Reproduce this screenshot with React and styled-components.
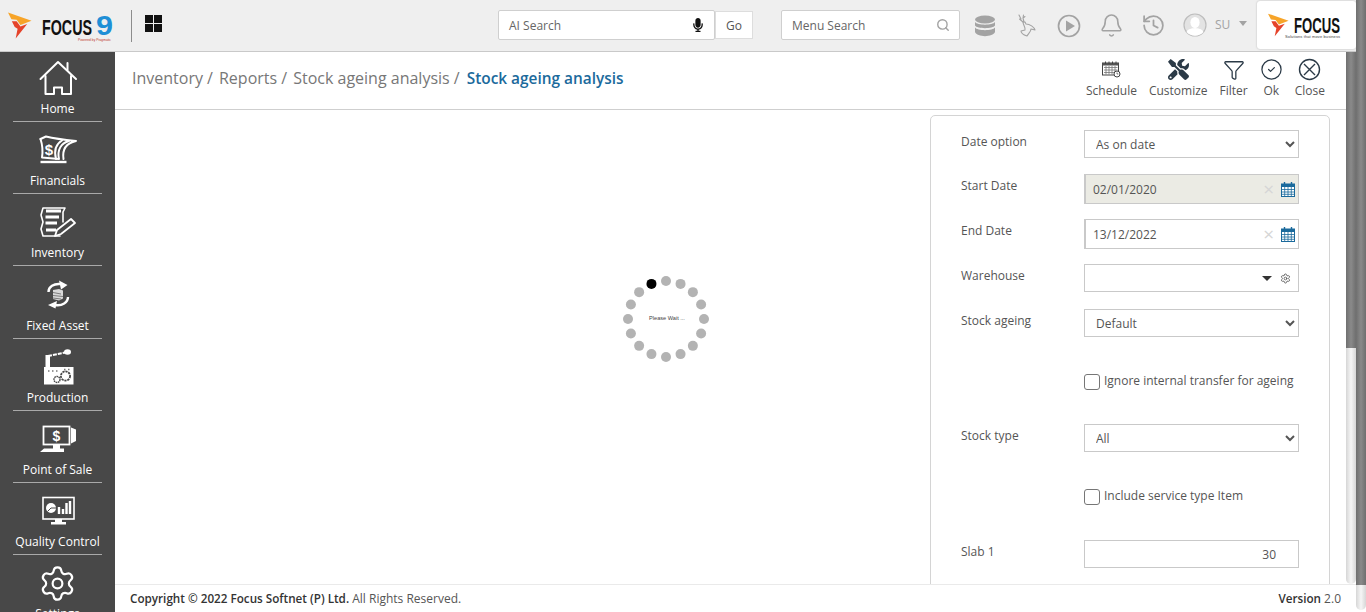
import React from "react";
import styled, { createGlobalStyle } from "styled-components";
import { Bell, History, Search, Filter, CircleCheck, Settings } from "lucide-react";
import { FaMicrophone, FaTools } from "react-icons/fa";

const GlobalStyle = createGlobalStyle`
  html, body {
    margin: 0;
    padding: 0;
    height: 100%;
    overflow: hidden;
    background: #fff;
    font-family: "Open Sans", "Liberation Sans", sans-serif;
  }
  * { box-sizing: border-box; }
`;

const BRAND_BLUE = "#1b6a9c";

const FlameMark = ({ width, height }) => (
  <svg width={width} height={height} viewBox="0 0 25 27">
    <path d="M0 0 L24.5 8.5 L13 13 L9 7.5 L3.5 7 Z" fill="#f7a428" />
    <path d="M4 9 L9 9 L13 14.5 L20 12 L8 27 L10 17 L7 15 Z" fill="#e5432a" />
  </svg>
);

const Focus9Logo = () => (
  <LogoWrap>
    <FlameMark width={25} height={27} />
    <svg width={72} height={30} viewBox="0 0 72 30">
      <text x="0" y="23.5" fontFamily="Liberation Sans" fontWeight="700" fontSize="22" textLength="50" lengthAdjust="spacingAndGlyphs" fill="#111">FOCUS</text>
      <text x="54" y="24" fontFamily="Liberation Sans" fontWeight="700" fontSize="27" textLength="17" lengthAdjust="spacingAndGlyphs" fill="#1f8fd6">9</text>
      <text x="36" y="30" fontFamily="Liberation Sans" fontSize="4" textLength="33" lengthAdjust="spacingAndGlyphs" fill="#c0392b">Powered by Pragmatic</text>
    </svg>
  </LogoWrap>
);

const FocusCardLogo = () => (
  <LogoCard>
    <FlameMark width={21} height={24} />
    <svg width={48} height={28} viewBox="0 0 48 28">
      <text x="1" y="22" fontFamily="Liberation Sans" fontWeight="700" fontSize="22" textLength="46" lengthAdjust="spacingAndGlyphs" fill="#111">FOCUS</text>
      <text x="-8" y="27" fontFamily="Liberation Sans" fontSize="4" textLength="55" lengthAdjust="spacing" fill="#444">Solutions that move business</text>
    </svg>
  </LogoCard>
);

const WhiteLine = { fill: "none", stroke: "#fff", strokeWidth: 2, strokeLinejoin: "round", strokeLinecap: "round" };

const HomeIcon = () => (
  <svg width="60" height="40" viewBox="0 0 60 40">
    <g {...WhiteLine}>
      <path d="M12.5 21 L30 4 L48 21" />
      <path d="M17.5 18 V36 H26 V29.5 H34 V36 H43 V18" />
      <path d="M39.5 5 V12" />
    </g>
  </svg>
);

const FinancialsIcon = () => (
  <svg width="60" height="40" viewBox="0 0 60 40">
    <g {...WhiteLine}>
      <path d="M12.5 9 L18 6.5 C28 9 38 10 48 11 C39 13 34 19 35.5 29" />
      <path d="M12.5 9 C14.5 15 15 21 14 27.5 L31 29 C29 20 33 13 41 11" />
      <path d="M28 29 C26 21 28 14 34 10.5" />
    </g>
    <path d="M12.5 32 H38.5" stroke="#fff" strokeWidth="2.4" />
    <text x="21" y="25" textAnchor="middle" fontFamily="Liberation Sans" fontWeight="700" fontSize="15" fill="#fff">$</text>
  </svg>
);

const InventoryIcon = () => (
  <svg width="60" height="40" viewBox="0 0 60 40">
    <path d="M15 6 H37 L35 10 V20 M13 13 L15 6 M13 13 L15 20 L13 27 L15 34 H32" {...WhiteLine} strokeWidth="1.6" />
    <path d="M18 9 H33 M17.5 15 H31 M17.5 21 H29 M18 28 H28" stroke="#fff" strokeWidth="3" />
    <path d="M27 34 L29 28 L43 17 L47 21 L33 32 Z" fill="#484848" stroke="#fff" strokeWidth="1.8" strokeLinejoin="round" />
  </svg>
);

const FixedAssetIcon = () => (
  <svg width="60" height="40" viewBox="0 0 60 40">
    <g fill="none" stroke="#fff" strokeWidth="2.4">
      <path d="M20.5 17 C20.5 11.5 26 8.5 32 9" />
      <path d="M40 22 C40 27.5 34 31 27.5 30" />
    </g>
    <path d="M31 5.5 L39.5 10 L33 14.5 Z M29 26 L20 30 L27.5 33.5 Z" fill="#fff" />
    <path d="M25 15 L31 14 L35 15.5 V23.5 L31 25.5 L25 24 Z" fill="#d8d8d8" />
    <path d="M25 17.5 L33 19 M25 20.5 L35 21.5 M25 23 L33 24" stroke="#7c7c7c" strokeWidth="1" />
  </svg>
);

const ProductionIcon = () => (
  <svg width="60" height="40" viewBox="0 0 60 40">
    <path d="M20 9 L30 7 L37 5.5" fill="none" stroke="#fff" strokeWidth="2" strokeDasharray="4 1" />
    <rect x="17.5" y="8" width="4.5" height="12" fill="#fff" />
    <ellipse cx="39.5" cy="5" rx="3.5" ry="2.8" fill="#fff" />
    <path d="M16 20 H45.5 V37.5 H16 Z" fill="#fff" />
    <path d="M20 24 h1.5 M24 24 h1.5 M28 24 h1.5 M36 22.5 h1.5 M40 22.5 h1.5" stroke="#777" strokeWidth="1.4" />
    <circle cx="37.5" cy="29" r="4.6" fill="#fff" stroke="#484848" strokeWidth="1.8" strokeDasharray="2.2 .8" />
    <circle cx="29" cy="32.5" r="3" fill="#fff" stroke="#484848" strokeWidth="1.4" strokeDasharray="1.6 .6" />
  </svg>
);

const PointOfSaleIcon = () => (
  <svg width="60" height="40" viewBox="0 0 60 40">
    <rect x="15.5" y="7.5" width="26" height="18" fill="none" stroke="#fff" strokeWidth="1.8" />
    <text x="28.5" y="22" textAnchor="middle" fontFamily="Liberation Sans" fontWeight="700" fontSize="14" fill="#fff">$</text>
    <path d="M43 8.5 L48 10.5 V22 L43 24.5 Z" fill="#fff" />
    <path d="M25 26 H32 V29.5 H36 V33 H12 L16 29.5 H25 Z" fill="#fff" />
  </svg>
);

const QualityIcon = () => (
  <svg width="60" height="40" viewBox="0 0 60 40">
    <rect x="15" y="6.5" width="31" height="21.5" fill="none" stroke="#fff" strokeWidth="1.6" />
    <circle cx="23" cy="17" r="5" fill="#fff" />
    <path d="M23 17 L28 17 M23 17 L19.5 20.5" stroke="#484848" strokeWidth="1" />
    <path d="M31 16 V23 M35 18 V23 M38.5 12 V23 M42 10 V23" stroke="#fff" strokeWidth="2.4" />
    <path d="M27 28 H34 V31 H38 V33.5 H23 V31 H27 Z" fill="#fff" />
  </svg>
);

const SettingsIcon = () => <Settings size={39} color="#fff" strokeWidth={1.35} />;

const NAV_ITEMS = [
  { label: "Home", Icon: HomeIcon },
  { label: "Financials", Icon: FinancialsIcon },
  { label: "Inventory", Icon: InventoryIcon },
  { label: "Fixed Asset", Icon: FixedAssetIcon },
  { label: "Production", Icon: ProductionIcon },
  { label: "Point of Sale", Icon: PointOfSaleIcon },
  { label: "Quality Control", Icon: QualityIcon },
  { label: "Settings", Icon: SettingsIcon },
];

const DatabaseIcon = () => (
  <svg width="22" height="22" viewBox="0 0 22 22">
    <ellipse cx="11" cy="4.5" rx="10" ry="4" fill="#a3a3a3" />
    <path d="M1 7 C3 10.5 19 10.5 21 7 V10.5 C19 14 3 14 1 10.5 Z" fill="#a3a3a3" />
    <path d="M1 12.5 C3 16 19 16 21 12.5 V17 C19 22.5 3 22.5 1 17 Z" fill="#a3a3a3" />
  </svg>
);

const DeerIcon = () => (
  <svg width="18" height="23" viewBox="0 0 18 23" fill="none" stroke="#a3a3a3" strokeWidth="1.1" strokeLinejoin="round" strokeLinecap="round">
    <path d="M1 1 L3 5 L1.5 5 L5 8 M5.5 1 L5 4 L7 2.5 M5 4 L6 8" />
    <path d="M5 8 L7 8 L8 10 C12 10 16 13 17 16 L13 15 C13 18 10 20 9 22 C6 21 3 19 3 17 L7 16 C8 14 5 11 5 8 Z" />
  </svg>
);

const PlayIcon = () => (
  <svg width="24" height="24" viewBox="0 0 24 24">
    <circle cx="12" cy="12" r="10.5" fill="none" stroke="#a3a3a3" strokeWidth="1.7" />
    <path d="M9 6.5 L18 12 L9 17.5 Z" fill="#a3a3a3" />
  </svg>
);

const AvatarIcon = () => (
  <svg width="24" height="24" viewBox="0 0 24 24">
    <circle cx="12" cy="12" r="11" fill="#e3e3e3" stroke="#bdbdbd" strokeWidth="1.2" />
    <ellipse cx="12" cy="9.5" rx="4.6" ry="5.6" fill="#fff" />
    <path d="M3.5 19 C5 15.5 9 15.5 12 15 C15 15.5 19 15.5 20.5 19 C16 24 8 24 3.5 19 Z" fill="#fff" />
  </svg>
);

const ScheduleIcon = () => (
  <svg width="19" height="17" viewBox="0 0 19 17">
    <rect x="0.5" y="2" width="16" height="12" fill="#fff" stroke="#444" />
    <rect x="0.5" y="2" width="16" height="2.5" fill="#555" />
    <path d="M3.5 0.5 V3 M7 0.5 V3 M10.5 0.5 V3 M14 0.5 V3" stroke="#444" />
    <path d="M2 6.5 H15.5 M2 9 H15.5 M2 11.5 H15.5 M4 5 V13.5 M7 5 V13.5 M10 5 V13.5 M13 5 V13.5" stroke="#777" strokeWidth=".8" />
    <circle cx="15" cy="13" r="3" fill="#fff" stroke="#444" />
    <path d="M15 11.5 V13 H16.3" fill="none" stroke="#444" strokeWidth=".7" />
  </svg>
);

const CloseCircleIcon = () => (
  <svg width="23" height="23" viewBox="0 0 23 23" fill="none" stroke="#2b3a47" strokeWidth="1.4">
    <circle cx="11.5" cy="11.5" r="10" />
    <path d="M6 6 L17 17 M17 6 L6 17" />
  </svg>
);

const CalendarIcon = () => (
  <svg width="14" height="15" viewBox="0 0 14 15">
    <rect x="0.5" y="2" width="13" height="12.5" fill="#fff" stroke={BRAND_BLUE} />
    <rect x="0.5" y="2" width="13" height="3" fill={BRAND_BLUE} />
    <path d="M3.5 0 V3 M10.5 0 V3" stroke={BRAND_BLUE} strokeWidth="1.4" />
    <path d="M0.5 7.5 H13.5 M0.5 10 H13.5 M0.5 12.3 H13.5 M3.7 5 V14 M7 5 V14 M10.3 5 V14" stroke={BRAND_BLUE} strokeWidth=".8" />
  </svg>
);

const TOOLS = [
  { label: "Schedule", icon: <ScheduleIcon /> },
  { label: "Customize", icon: <FaTools size={21} color="#2b3a47" /> },
  { label: "Filter", icon: <Filter size={22} color="#2b3a47" strokeWidth={1.4} /> },
  { label: "Ok", icon: <CircleCheck size={23} color="#2b3a47" strokeWidth={1.3} /> },
  { label: "Close", icon: <CloseCircleIcon /> },
];

const DOT_COUNT = 16;

const LoadingSpinner = () => (
  <SpinnerBox>
    <svg width="90" height="90" viewBox="0 0 90 90">
      {Array.from({ length: DOT_COUNT }).map((_, i) => {
        const angle = (i / DOT_COUNT) * Math.PI * 2;
        return (
          <circle
            key={i}
            cx={45 + Math.sin(angle) * 38}
            cy={45 - Math.cos(angle) * 38}
            r="5"
            fill={i === DOT_COUNT - 1 ? "#000" : "#b3b3b3"}
          />
        );
      })}
      <text x="46" y="46" textAnchor="middle" fontFamily="Liberation Sans" fontSize="5.6" fill="#444">Please Wait ...</text>
    </svg>
  </SpinnerBox>
);

const DateField = ({ value, disabled }) => (
  <DateBox $disabled={disabled}>
    <DateInput readOnly value={value} />
    <ClearMark>×</ClearMark>
    <CalendarIcon />
  </DateBox>
);

export default function App() {
  return (
    <>
      <GlobalStyle />
      <Page>
        <Shell>
          <TopBar>
            <Focus9Logo />
            <Separator />
            <AppGrid><i /><i /><i /><i /></AppGrid>
            <SearchBox $width={217} $left={336}>
              <SearchText>AI Search</SearchText>
              <FaMicrophone size={14} color="#111" />
            </SearchBox>
            <GoButton>Go</GoButton>
            <SearchBox $width={179} $left={28}>
              <SearchText>Menu Search</SearchText>
              <Search size={14} color="#a3a3a3" strokeWidth={2.4} />
            </SearchBox>
            <StatusIcons>
              <DatabaseIcon />
              <DeerIcon />
              <PlayIcon />
              <Bell size={25} color="#a3a3a3" strokeWidth={1.5} />
              <History size={25} color="#a3a3a3" strokeWidth={1.7} />
            </StatusIcons>
            <UserBlock>
              <AvatarIcon />
              <UserName>SU</UserName>
              <Caret />
            </UserBlock>
            <FocusCardLogo />
          </TopBar>
          <Body>
            <Sidebar>
              {NAV_ITEMS.map(({ label, Icon }, i) => (
                <NavItem key={label} $first={i === 0}>
                  <NavGlyph><Icon /></NavGlyph>
                  <NavLabel>{label}</NavLabel>
                </NavItem>
              ))}
            </Sidebar>
            <Content>
              <WorkRow>
                <Main>
                  <PageHead>
                    <Crumbs>
                      <span>Inventory /</span>
                      <span>Reports /</span>
                      <span>Stock ageing analysis /</span>
                      <CurrentCrumb>Stock ageing analysis</CurrentCrumb>
                    </Crumbs>
                    <Toolbar>
                      {TOOLS.map((tool) => (
                        <ToolButton key={tool.label}>
                          <ToolGlyph>{tool.icon}</ToolGlyph>
                          <span>{tool.label}</span>
                        </ToolButton>
                      ))}
                    </Toolbar>
                  </PageHead>
                  <Canvas>
                    <FilterPanel>
                      <FormRow $top={0}>
                        <FieldLabel>Date option</FieldLabel>
                        <Select defaultValue="As on date"><option>As on date</option></Select>
                      </FormRow>
                      <FormRow $top={16}>
                        <FieldLabel>Start Date</FieldLabel>
                        <DateField value="02/01/2020" disabled />
                      </FormRow>
                      <FormRow $top={15}>
                        <FieldLabel>End Date</FieldLabel>
                        <DateField value="13/12/2022" />
                      </FormRow>
                      <FormRow $top={15}>
                        <FieldLabel>Warehouse</FieldLabel>
                        <LookupBox>
                          <LookupCaret />
                          <Settings size={11} color="#444" strokeWidth={1.6} />
                        </LookupBox>
                      </FormRow>
                      <FormRow $top={17}>
                        <FieldLabel>Stock ageing</FieldLabel>
                        <Select defaultValue="Default"><option>Default</option></Select>
                      </FormRow>
                      <CheckRow $top={37}>
                        <CheckBox />
                        <CheckLabel>Ignore internal transfer for ageing</CheckLabel>
                      </CheckRow>
                      <FormRow $top={34}>
                        <FieldLabel>Stock type</FieldLabel>
                        <Select defaultValue="All"><option>All</option></Select>
                      </FormRow>
                      <CheckRow $top={37}>
                        <CheckBox />
                        <CheckLabel>Include service type Item</CheckLabel>
                      </CheckRow>
                      <FormRow $top={35}>
                        <FieldLabel>Slab 1</FieldLabel>
                        <NumberInput readOnly value="30" />
                      </FormRow>
                    </FilterPanel>
                  </Canvas>
                </Main>
                <ScrollRail><RailThumb $height={296} /></ScrollRail>
              </WorkRow>
              <Footer>
                <span><strong>Copyright © 2022 Focus Softnet (P) Ltd.</strong> All Rights Reserved.</span>
                <span><strong>Version</strong> 2.0</span>
              </Footer>
            </Content>
          </Body>
        </Shell>
        <ScrollRail $gap={2}><RailThumb $height={585} /></ScrollRail>
        <LoadingSpinner />
      </Page>
    </>
  );
}

const Page = styled.div`
  position: relative;
  display: flex;
  width: 100%;
  height: 100vh;
  overflow: hidden;
`;

const Shell = styled.div`
  flex: 1;
  min-width: 0;
  display: flex;
  flex-direction: column;
`;

const TopBar = styled.header`
  flex: none;
  height: 52px;
  display: flex;
  align-items: center;
  padding-left: 8px;
  background: #efefef;
  border-bottom: 1px solid #c9c9c9;
`;

const LogoWrap = styled.div`
  width: 106px;
  display: flex;
  align-items: center;
  gap: 10px;
  svg:last-child {
    overflow: visible;
  }
`;

const Separator = styled.div`
  width: 1px;
  height: 32px;
  margin-left: 17px;
  background: #8c8c8c;
`;

const AppGrid = styled.div`
  width: 17px;
  height: 17px;
  margin: -4px 0 0 13px;
  display: grid;
  grid-template-columns: 1fr 1fr;
  gap: 1px;
  i {
    background: #111;
  }
`;

const SearchBox = styled.div`
  width: ${(p) => p.$width}px;
  height: 30px;
  margin: -1px 0 0 ${(p) => p.$left}px;
  padding: 0 9px 0 10px;
  display: flex;
  align-items: center;
  justify-content: space-between;
  background: #fff;
  border: 1px solid #cfcfcf;
  border-radius: 2px;
`;

const SearchText = styled.span`
  font-size: 12px;
  color: #666;
`;

const GoButton = styled.div`
  width: 38px;
  height: 28px;
  margin-top: -1px;
  display: flex;
  align-items: center;
  justify-content: center;
  font-size: 12px;
  color: #555;
  background: #fff;
  border: 1px solid #ddd;
`;

const StatusIcons = styled.div`
  width: 211px;
  margin-left: 4px;
  display: grid;
  grid-template-columns: repeat(5, 42.2px);
  align-items: center;
  justify-items: center;
`;

const UserBlock = styled.div`
  margin: -1px 0 0 8px;
  display: flex;
  align-items: center;
  gap: 8px;
`;

const UserName = styled.span`
  font-size: 12px;
  color: #a3a3a3;
  margin-top: -2px;
`;

const Caret = styled.span`
  width: 0;
  height: 0;
  margin: -4px 0 0 1px;
  border-left: 4px solid transparent;
  border-right: 4px solid transparent;
  border-top: 5px solid #a3a3a3;
`;

const LogoCard = styled.div`
  width: 99px;
  height: 48px;
  margin: -2px 0 0 auto;
  padding: 0 0 0 11px;
  display: flex;
  align-items: center;
  gap: 4px;
  background: #fff;
  border-radius: 3px;
  box-shadow: 0 0 2px rgba(0, 0, 0, 0.25);
  svg {
    overflow: visible;
  }
`;

const Body = styled.div`
  flex: 1;
  min-height: 0;
  display: flex;
`;

const Sidebar = styled.nav`
  flex: none;
  width: 115px;
  padding: 0 13px;
  overflow: hidden;
  background: #484848;
`;

const NavItem = styled.div`
  height: ${(p) => (p.$first ? 70 : 72.2)}px;
  padding-bottom: 4px;
  display: flex;
  flex-direction: column;
  align-items: center;
  justify-content: flex-end;
  border-bottom: 1px solid #a9a9a9;
`;

const NavGlyph = styled.div`
  height: 40px;
  margin-bottom: 2px;
  display: flex;
  align-items: center;
  justify-content: center;
`;

const NavLabel = styled.span`
  height: 17px;
  line-height: 17px;
  font-size: 12px;
  white-space: nowrap;
  color: #fff;
`;

const Content = styled.div`
  flex: 1;
  min-width: 0;
  display: flex;
  flex-direction: column;
`;

const WorkRow = styled.div`
  flex: 1;
  min-height: 0;
  display: flex;
`;

const Main = styled.main`
  flex: 1;
  min-width: 0;
  display: flex;
  flex-direction: column;
`;

const PageHead = styled.div`
  flex: none;
  height: 58px;
  padding: 0 21px 0 17px;
  display: flex;
  align-items: flex-start;
  justify-content: space-between;
  border-bottom: 1px solid #cfcfcf;
`;

const Crumbs = styled.div`
  margin-top: 14px;
  display: flex;
  align-items: baseline;
  gap: 6px;
  font-size: 16px;
  line-height: 24px;
  color: #777;
`;

const CurrentCrumb = styled.span`
  margin-left: 1px;
  font-size: 15.4px;
  font-weight: 600;
  color: ${BRAND_BLUE};
`;

const Toolbar = styled.div`
  margin-top: 5px;
  display: flex;
  gap: 12px;
`;

const ToolButton = styled.div`
  display: flex;
  flex-direction: column;
  align-items: center;
  font-size: 12px;
  line-height: 17px;
  color: #555;
`;

const ToolGlyph = styled.div`
  height: 25px;
  display: flex;
  align-items: center;
  justify-content: center;
`;

const Canvas = styled.div`
  flex: 1;
  min-height: 0;
  padding: 5px 16px 0 0;
  display: flex;
  justify-content: flex-end;
  overflow: hidden;
`;

const FilterPanel = styled.section`
  flex: none;
  width: 400px;
  height: 560px;
  padding: 14px 0 0 30px;
  border: 1px solid #d4d4d4;
  border-radius: 5px 5px 0 0;
`;

const FormRow = styled.div`
  margin-top: ${(p) => p.$top}px;
  display: grid;
  grid-template-columns: 123px 215px;
  align-items: start;
`;

const CheckRow = styled.div`
  margin: ${(p) => p.$top}px 0 0 123px;
  display: flex;
  align-items: center;
  gap: 4px;
`;

const FieldLabel = styled.label`
  font-size: 12px;
  line-height: 17px;
  padding-top: 3px;
  color: #555;
`;

const controlBase = `
  width: 215px;
  height: 28px;
  background: #fff;
  border: 1px solid #c9c9c9;
  font-family: "Open Sans", "Liberation Sans", sans-serif;
  font-size: 12px;
  color: #555;
  outline: none;
`;

const Select = styled.select`
  ${controlBase}
  padding: 0 0 0 7px;
  border-radius: 0;
`;

const NumberInput = styled.input`
  ${controlBase}
  padding: 0 22px 0 0;
  text-align: right;
`;

const DateBox = styled.div`
  width: 215px;
  height: 30px;
  padding-right: 3px;
  display: flex;
  align-items: center;
  background: ${(p) => (p.$disabled ? "#ebebe4" : "#fff")};
  border: 1px solid #c9c9c9;
  border-left-width: 2px;
`;

const DateInput = styled.input`
  flex: 1;
  min-width: 0;
  height: 100%;
  padding: 0 0 0 7px;
  border: 0;
  outline: none;
  background: transparent;
  font-family: "Open Sans", "Liberation Sans", sans-serif;
  font-size: 12px;
  color: #555;
`;

const ClearMark = styled.span`
  margin-right: 7px;
  font-size: 19px;
  line-height: 17px;
  color: #d6d6d6;
`;

const LookupBox = styled.div`
  width: 215px;
  height: 28px;
  padding-right: 7px;
  display: flex;
  align-items: center;
  justify-content: flex-end;
  gap: 8px;
  background: #fff;
  border: 1px solid #c9c9c9;
`;

const LookupCaret = styled.span`
  width: 0;
  height: 0;
  border-left: 5px solid transparent;
  border-right: 5px solid transparent;
  border-top: 5px solid #333;
`;

const CheckBox = styled.span`
  flex: none;
  width: 16px;
  height: 16px;
  background: #fff;
  border: 1px solid #767676;
  border-radius: 3px;
`;

const CheckLabel = styled.span`
  font-size: 12px;
  color: #555;
  margin-top: -3px;
`;

const ScrollRail = styled.div`
  flex: none;
  width: 10px;
  margin-bottom: ${(p) => p.$gap || 0}px;
  border-radius: 0 0 5px 5px;
  background: linear-gradient(90deg, #d6d6d6, #f6f6f6 50%, #d6d6d6);
`;

const RailThumb = styled.div`
  height: ${(p) => p.$height}px;
  background: linear-gradient(90deg, #6f6f6f, #8a8a8a 50%, #6f6f6f);
`;

const Footer = styled.footer`
  flex: none;
  height: 28px;
  padding: 0 15px;
  display: flex;
  align-items: center;
  justify-content: space-between;
  font-size: 12px;
  color: #555;
  background: #fff;
  border-top: 1px solid #eaeaea;
  strong {
    font-size: 11.7px;
    font-weight: 600;
    color: #333;
  }
`;

const SpinnerBox = styled.div`
  position: absolute;
  left: 621px;
  top: 274px;
  width: 90px;
  height: 90px;
`;
